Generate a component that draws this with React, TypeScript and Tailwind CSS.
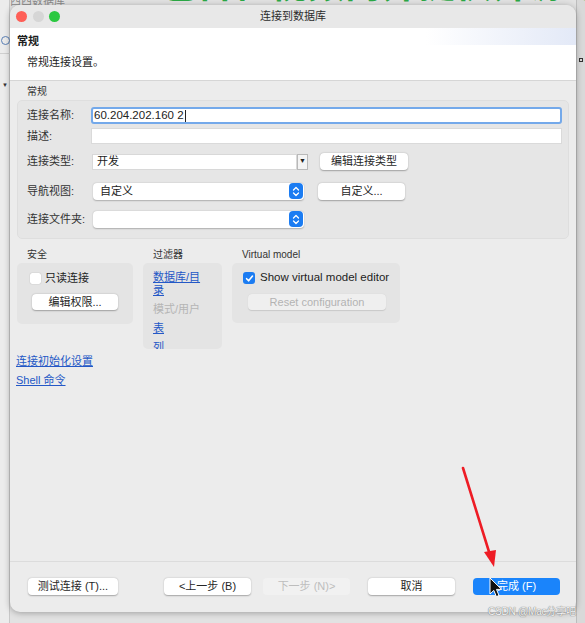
import React from "react";

const Btn = ({ children, w, className = "" }: { children: React.ReactNode; w: string; className?: string }) => (
  <div
    className={`${w} h-[17px] rounded-[4px] bg-white shadow-[0_0.5px_1.5px_rgba(0,0,0,0.3)] flex items-center justify-center text-[11px] text-[#262626] ${className}`}
  >
    {children}
  </div>
);

const Stepper = () => (
  <div className="w-[14px] h-[16px] rounded-[4px] bg-[#1b7cf2] flex items-center justify-center">
    <svg width="8" height="11" viewBox="0 0 8 11">
      <path d="M1.5 4 L4 1.5 L6.5 4" stroke="white" strokeWidth="1.3" fill="none" strokeLinecap="round" strokeLinejoin="round" />
      <path d="M1.5 7 L4 9.5 L6.5 7" stroke="white" strokeWidth="1.3" fill="none" strokeLinecap="round" strokeLinejoin="round" />
    </svg>
  </div>
);

const Popup = ({ text }: { text?: string }) => (
  <div className="ml-[2px] w-[211px] h-[17px] rounded-[4px] bg-white shadow-[0_0.5px_1.5px_rgba(0,0,0,0.25)] flex items-center justify-between pr-[1px]">
    <span className="pl-[7px] text-[11px] text-[#222]">{text}</span>
    <Stepper />
  </div>
);

const Label = ({ children }: { children: React.ReactNode }) => (
  <div className="w-[64px] shrink-0 text-[11px] text-[#333]">{children}</div>
);

export default function App() {
  return (
    <div className="relative w-[585px] h-[623px] overflow-hidden bg-[#e2e2e2] font-['Liberation_Sans','Noto_Sans_CJK_SC',sans-serif]">
      {/* background application behind the dialog */}
      <div className="absolute left-0 top-0 w-[10px] h-[623px] bg-[#ececec] border-r border-[#c8c8c8]">
        <div className="mt-[36px] ml-[1px] w-[9px] h-[9px] rounded-full border-[1.5px] border-[#5a7fb5]" />
        <div className="mt-[8px] w-[10px] h-px bg-[#cfcfcf]" />
        <div className="mt-[28px] ml-[2px] text-[6px] leading-[6px] text-[#333]">▼</div>
      </div>
      <div className="absolute left-[10px] top-[-7px] text-[11px] text-[#8a8a8a]">西西数据库</div>
      <div className="absolute right-0 top-0 w-[9px] h-[623px] bg-[#d9d9d9] border-l border-[#bdbdbd]">
        <div className="mt-[58px] ml-[2px] w-[4px] h-[4px] border border-[#333]" />
      </div>
      {/* green caption overlay */}
      <div className="absolute left-[160px] top-[-41px] whitespace-nowrap text-[36px] font-bold text-[#2aa845] tracking-[1px]">
        包含在视频内并提供开源地址
      </div>

      {/* dialog window */}
      <div className="absolute left-[10px] top-[5px] w-[566px] h-[607px] rounded-[10px] bg-[#ececec] shadow-[0_1px_6px_rgba(0,0,0,0.3)] overflow-hidden flex flex-col">
        {/* title bar */}
        <div className="h-[23px] shrink-0 bg-[#e8e8e8] grid grid-cols-[1fr_auto_1fr] items-center">
          <div className="flex items-center gap-[5.5px] pl-[6px]">
            <div className="w-[11px] h-[11px] rounded-full bg-[#fe5f57]" />
            <div className="w-[11px] h-[11px] rounded-full bg-[#d6d6d6]" />
            <div className="w-[11px] h-[11px] rounded-full bg-[#2bc840]" />
          </div>
          <div className="text-[11px] text-[#2c2c2c]">连接到数据库</div>
          <div />
        </div>

        {/* header */}
        <div className="relative h-[53px] shrink-0 bg-white border-b border-[#d6d6d6] pl-[7px] pt-[6px]">
          <div className="absolute right-0 top-0 w-[150px] h-[17px] bg-gradient-to-r from-white to-[#e3e9f7]" />
          <div className="relative h-[14px] leading-[14px] text-[11px] font-bold text-[#1d1d1d]">常规</div>
          <div className="mt-[7px] h-[14px] leading-[14px] pl-[10px] text-[11px] text-[#1d1d1d]">常规连接设置。</div>
        </div>

        {/* body */}
        <div className="flex-1 px-[7px] pt-[5px]">
          <div className="h-[12px] leading-[12px] pl-[10px] text-[10px] text-[#333]">常规</div>

          <div className="mt-[2px] h-[139px] rounded-[5px] bg-[#e6e6e6] border border-[#dedede] pl-[9px] pr-[6px] pt-[6px] flex flex-col">
            {/* row 1 */}
            <div className="h-[17px] flex items-center">
              <Label>连接名称:</Label>
              <div className="flex-1 h-[17px] rounded-[3px] border-2 border-[#74a9ea] bg-white flex items-center pl-[1px] text-[11.5px] text-[#222]">
                60.204.202.160 2<span className="ml-[1px] w-px h-[12px] bg-[#222]" />
              </div>
            </div>
            {/* row 2 */}
            <div className="mt-[4px] h-[16px] flex items-center">
              <Label>描述:</Label>
              <div className="flex-1 h-[16px] bg-white border border-[#dadada]" />
            </div>
            {/* row 3 */}
            <div className="mt-[9px] h-[17px] flex items-center">
              <Label>连接类型:</Label>
              <div className="ml-[1px] w-[205px] h-[16px] bg-white border border-[#d8d8d8] flex items-center pl-[4px] text-[11px] text-[#222]">开发</div>
              <div className="w-[11px] h-[16px] bg-[#f4f4f4] border border-[#b9b9b9] flex items-center justify-center text-[7px] text-[#222]">▼</div>
              <Btn w="w-[88px]" className="ml-[12px]">编辑连接类型</Btn>
            </div>
            {/* row 4 */}
            <div className="mt-[12px] h-[18px] flex items-center">
              <Label>导航视图:</Label>
              <Popup text="自定义" />
              <Btn w="w-[87px]" className="ml-[14px]">自定义...</Btn>
            </div>
            {/* row 5 */}
            <div className="mt-[10px] h-[18px] flex items-center">
              <Label>连接文件夹:</Label>
              <Popup />
            </div>
          </div>

          {/* section row */}
          <div className="mt-[10px] flex gap-[10px] items-start">
            <div className="flex flex-col">
              <div className="h-[12px] leading-[12px] pl-[10px] text-[10px] text-[#333]">安全</div>
              <div className="mt-[2px] w-[116px] h-[61px] rounded-[5px] bg-[#e4e4e4] pl-[13px] pt-[9px]">
                <div className="flex items-center h-[12px]">
                  <div className="w-[11px] h-[11px] rounded-[2px] bg-white shadow-[0_0_1px_rgba(0,0,0,0.35)]" />
                  <span className="ml-[4px] text-[11px] text-[#222]">只读连接</span>
                </div>
                <Btn w="w-[86px]" className="mt-[10px] ml-[2px] !h-[16px]">编辑权限...</Btn>
              </div>
            </div>
            <div className="flex flex-col">
              <div className="h-[12px] leading-[12px] pl-[10px] text-[10px] text-[#333]">过滤器</div>
              <div className="mt-[2px] w-[79px] h-[86px] rounded-[5px] bg-[#e4e4e4] pl-[10px] pt-[8px] overflow-hidden flex flex-col gap-[6px] text-[11px] leading-[13px]">
                <div className="w-[55px] text-[#2458c6] underline">数据库/目录</div>
                <div className="text-[#b5b5b5]">模式/用户</div>
                <div className="text-[#2458c6] underline">表</div>
                <div className="text-[#2458c6] underline">列</div>
              </div>
            </div>
            <div className="flex flex-col">
              <div className="h-[12px] leading-[12px] pl-[10px] text-[10px] text-[#333]">Virtual model</div>
              <div className="mt-[2px] w-[168px] h-[60px] rounded-[5px] bg-[#e4e4e4] pl-[11px] pt-[9px]">
                <div className="flex items-center h-[12px]">
                  <div className="w-[12px] h-[12px] rounded-[3px] bg-[#1b7cf2] flex items-center justify-center">
                    <svg width="9" height="9" viewBox="0 0 9 9">
                      <path d="M1.6 4.7 L3.6 6.8 L7.5 2" stroke="white" strokeWidth="1.6" fill="none" strokeLinecap="round" strokeLinejoin="round" />
                    </svg>
                  </div>
                  <span className="ml-[5px] text-[11.5px] text-[#1d1d1d]">Show virtual model editor</span>
                </div>
                <div className="mt-[10px] ml-[5px] w-[138px] h-[16px] rounded-[4px] bg-[#efefef] shadow-[0_0.5px_1px_rgba(0,0,0,0.12)] flex items-center justify-center text-[11px] text-[#b3b3b3]">
                  Reset configuration
                </div>
              </div>
            </div>
          </div>

          {/* links */}
          <div className="-ml-[1px] mt-[6px] flex flex-col gap-[6px] text-[11px] leading-[13px] text-[#2458c6]">
            <div className="underline">连接初始化设置</div>
            <div className="underline">Shell 命令</div>
          </div>
        </div>

        {/* footer */}
        <div className="h-[51px] shrink-0 border-t border-[#dcdcdc] flex items-start pt-[16px] pl-[18px] pr-[16px]">
          <Btn w="w-[90px]">测试连接 (T)...</Btn>
          <div className="flex-1" />
          <Btn w="w-[87px]">&lt;上一步 (B)</Btn>
          <div className="ml-[12px] w-[87px] h-[17px] rounded-[4px] bg-[#f1f1f1] flex items-center justify-center text-[11px] text-[#bdbdbd]">下一步 (N)&gt;</div>
          <Btn w="w-[87px]" className="ml-[18px]">取消</Btn>
          <div className="ml-[18px] w-[87px] h-[17px] rounded-[4px] bg-[#1a84fb] flex items-center justify-center text-[11px] text-white">完成 (F)</div>
        </div>
      </div>

      {/* red annotation arrow */}
      <svg className="absolute left-0 top-0 pointer-events-none" width="585" height="623" viewBox="0 0 585 623">
        <line x1="463" y1="468" x2="490" y2="555" stroke="#ee1c25" strokeWidth="2.6" strokeLinecap="round" />
        <path d="M484 552 L494 567 L496 550 Z" fill="#ee1c25" />
      </svg>

      {/* mouse cursor */}
      <svg className="absolute left-[489px] top-[577px] pointer-events-none" width="14" height="22" viewBox="0 0 14 22">
        <path d="M1 1 L1 17 L4.8 13.4 L7.4 19.6 L10 18.5 L7.5 12.4 L12.6 12.4 Z" fill="#111" stroke="white" strokeWidth="1" strokeLinejoin="round" />
      </svg>

      {/* watermark */}
      <div className="absolute left-[488px] top-[605px] whitespace-nowrap text-[10px] leading-[13px] tracking-[-0.2px] text-[#f4f4f4] [text-shadow:0_0_1px_#777,0_0_1px_#777]">
        CSDN @Mac分享吧
      </div>
    </div>
  );
}
